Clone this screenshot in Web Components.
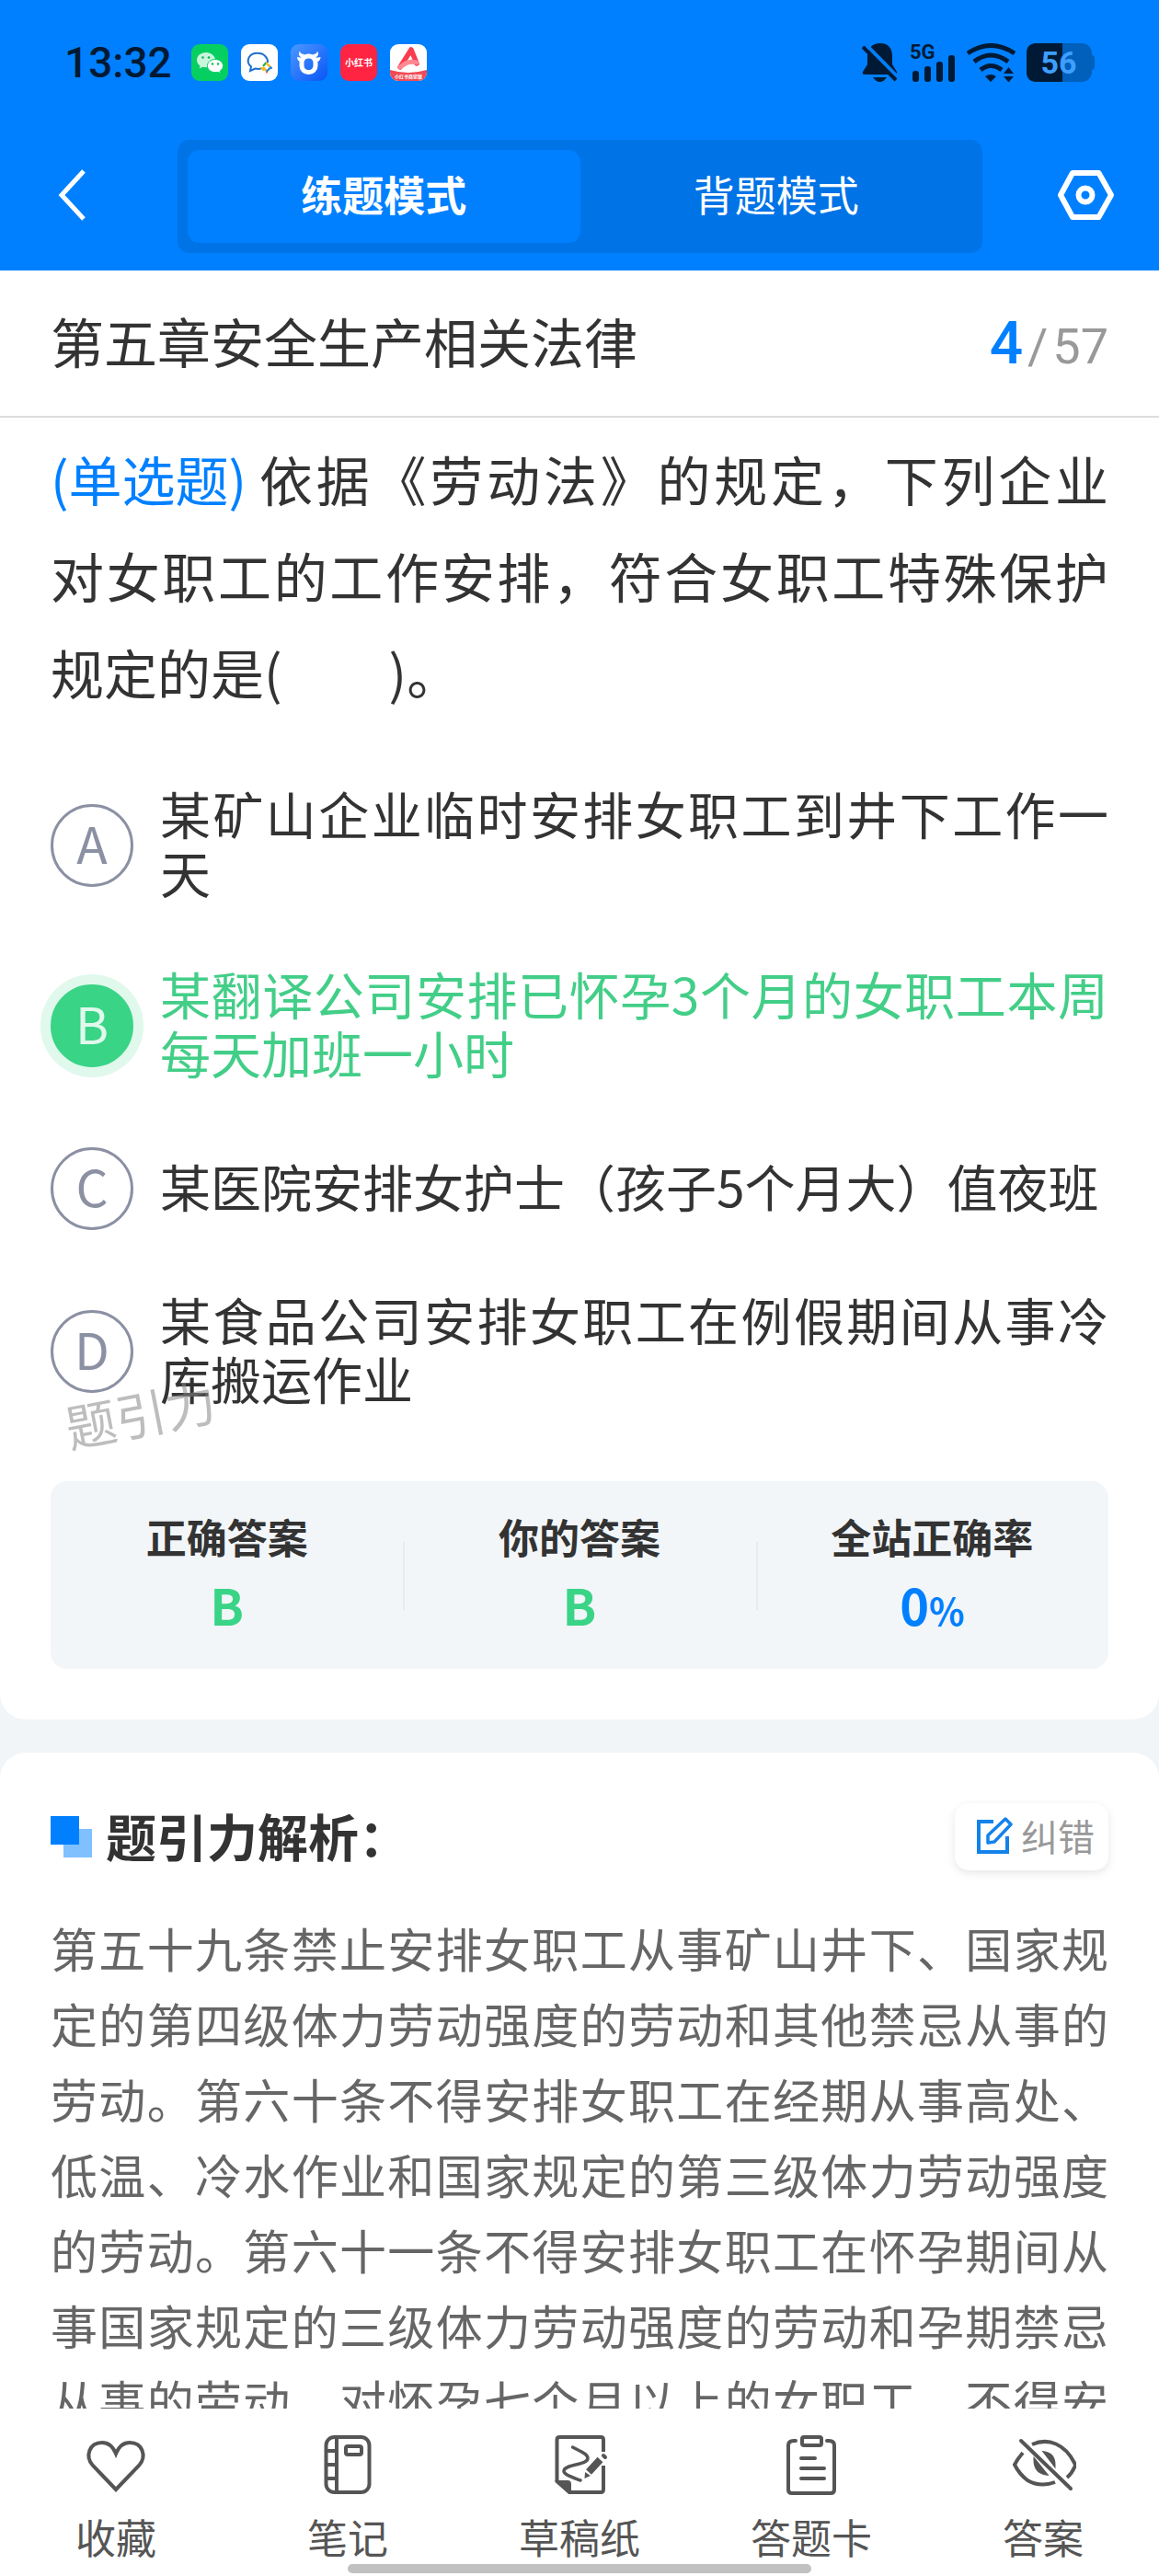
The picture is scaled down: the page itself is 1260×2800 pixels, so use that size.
<!DOCTYPE html>
<html lang="zh-CN">
<head>
<meta charset="utf-8">
<meta name="viewport" content="width=device-width, initial-scale=1">
<title>第五章安全生产相关法律</title>
<style>
  html, body {
    margin: 0;
    height: 100%;
  }
  body {
    font-family: "Noto Sans CJK SC", "Noto Sans", sans-serif;
    color: #333;
    background: #f1f5f8;
    --blue: #0080ff;
    --green: #3ad487;
    --side: 55px;
  }
</style>
</head>
<body>
<quiz-app>
  <status-bar slot="header" time="13:32"></status-bar>
  <mode-nav slot="header"></mode-nav>
  <chapter-bar current="4" total="57">第五章安全生产相关法律</chapter-bar>
  <quiz-card class="first">
    <question-text type="(单选题)">依据《劳动法》的规定，下列企业对女职工的工作安排，符合女职工特殊保护规定的是(　　)。</question-text>
    <answer-options watermark="题引力"></answer-options>
    <answer-stats></answer-stats>
  </quiz-card>
  <quiz-card>
    <answer-analysis label="题引力解析：">第五十九条禁止安排女职工从事矿山井下、国家规定的第四级体力劳动强度的劳动和其他禁忌从事的劳动。第六十条不得安排女职工在经期从事高处、低温、冷水作业和国家规定的第三级体力劳动强度的劳动。第六十一条不得安排女职工在怀孕期间从事国家规定的三级体力劳动强度的劳动和孕期禁忌从事的劳动。对怀孕七个月以上的女职工，不得安</answer-analysis>
  </quiz-card>
  <tool-bar slot="footer"></tool-bar>
</quiz-app>

<script>
function define(name, html, setup) {
  const template = document.createElement('template');
  template.innerHTML = html;
  customElements.define(name, class extends HTMLElement {
    constructor() {
      super();
      this.attachShadow({ mode: 'open' });
      this.shadowRoot.appendChild(template.content.cloneNode(true));
    }
    connectedCallback() {
      if (setup) setup.call(this, this.shadowRoot);
    }
  });
}

define('quiz-app', `
  <style>
    :host {
      display: flex;
      flex-direction: column;
      height: 100vh;
    }
    header { background: var(--blue); }
    main {
      flex: 1;
      min-height: 0;
      overflow: hidden;
    }
  </style>
  <header><slot name="header"></slot></header>
  <main><slot></slot></main>
  <slot name="footer"></slot>
`);

define('status-bar', `
  <style>
    :host {
      display: flex;
      align-items: center;
      justify-content: space-between;
      height: 136px;
      padding: 0 70px;
      color: #001a35;
    }
    div {
      display: flex;
      align-items: center;
    }
    .apps { gap: 14px; }
    .system { gap: 12px; }
    time {
      font: 500 46px/56px Roboto, sans-serif;
      margin-right: 7px;
    }
    svg { display: block; }
    text { font-family: "Noto Sans CJK SC", sans-serif; font-weight: 700; }
    .num { font-family: Roboto, sans-serif; }
  </style>
  <div class="apps">
    <time></time>
    <svg width="40" height="40" viewBox="0 0 40 40">
      <rect width="40" height="40" rx="9" fill="#06cf62"/>
      <path d="M16 9c-5.500 0-10 3.600-10 8.200 0 2.600 1.400 4.700 3.500 6.200l-.6 3 3.400-1.700c1.200.3 2.400.5 3.700.5 5.500 0 10-3.600 10-8s-4.500-8.200-10-8.200z" fill="#c9f5dc"/>
      <path d="M26 16.500c-4.800 0-8.600 3.200-8.600 7.100s3.800 7.100 8.600 7.100c1 0 2-.1 2.900-.4l2.800 1.500-.5-2.600c2-1.300 3.300-3.300 3.300-5.600 0-3.900-3.700-7.100-8.500-7.100z" fill="#fff" stroke="#06cf62"/>
      <g fill="#06b956"><circle cx="12.500" cy="14.500" r="1.300"/><circle cx="19" cy="14.500" r="1.300"/><circle cx="23" cy="21.500" r="1.200"/><circle cx="29" cy="21.500" r="1.200"/></g>
    </svg>
    <svg width="40" height="40" viewBox="0 0 40 40">
      <rect width="40" height="40" rx="9" fill="#fff"/>
      <path d="M22 26.500c-2.200.6-4.300.6-6.500 0L10 29l1-4.500C4 18 9 9.800 18 9.800c7 0 11.500 5 11 10.200" fill="none" stroke="#1f6fd0" stroke-width="2"/>
      <g fill="none" stroke-width="2.200" stroke-linecap="round">
        <path d="M27 20.500l-2.500 2.800" stroke="#22b04b"/><path d="M31 24l2 2" stroke="#1f7fe0"/>
        <path d="M28 29.500v1" stroke="#f0602a"/><path d="M22.500 26l2 2" stroke="#f7b718"/>
        <path d="M28 21l3 3M24.500 25.500l3 3.500" stroke="#f7b718"/><path d="M31 26.500l-2.500 2.500" stroke="#1f7fe0"/>
      </g>
    </svg>
    <svg width="40" height="40" viewBox="0 0 40 40">
      <linearGradient id="ox" x1="0" y1="0" x2="1" y2="1"><stop offset="0" stop-color="#4c98ff"/><stop offset="1" stop-color="#0a55f5"/></linearGradient>
      <rect width="40" height="40" rx="9" fill="url(#ox)"/>
      <rect x="12" y="13" width="15" height="17.500" rx="7" fill="none" stroke="#fff" stroke-width="5"/>
      <path d="M10 7.500c0 2 2 3.500 5 3.500l-3 3.500c-3-1.500-4-4-2-7zm19 0c0 2-2 3.500-5 3.500l3 3.500c3-1.500 4-4 2-7zM7 14l6 1-2 4c-2 0-4-2-4-5zm25.500 0l-6 1 2 4c2 0 4-2 4-5z" fill="#fff"/>
    </svg>
    <svg width="40" height="40" viewBox="0 0 40 40">
      <rect width="40" height="40" rx="9" fill="#ff2442"/>
      <text x="20" y="24" font-size="10" text-anchor="middle" fill="#fff">小红书</text>
    </svg>
    <svg width="40" height="40" viewBox="0 0 40 40">
      <clipPath id="seller"><rect width="40" height="40" rx="9"/></clipPath>
      <g clip-path="url(#seller)">
        <rect width="40" height="40" fill="#fff"/>
        <path d="M0 28q20 6 40 0v12H0z" fill="#f04a55"/>
        <path d="M11 25L23 6l6 15" fill="none" stroke="#fb3b50" stroke-width="5.500" stroke-linecap="round" stroke-linejoin="round"/>
        <path d="M11 25q9-8 18-5" fill="none" stroke="#ff8890" stroke-width="5" stroke-linecap="round"/>
        <text x="20" y="37" font-size="5" text-anchor="middle" fill="#fff">小红书商家版</text>
      </g>
    </svg>
  </div>
  <div class="system">
    <svg width="40" height="42" viewBox="0 0 40 42" fill="currentColor">
      <path d="M20 0C11 0 6 6 6 14v9l-5 8q-1 3 2 3h33q3 0 2-3l-5-8v-9C33 6 29 0 20 0z"/>
      <path d="M12 37h15c-2 3-4.500 5-7.500 5S14 40 12 37z"/>
      <path d="M0-3l42 43" stroke="#0080ff" stroke-width="4"/>
      <path d="M1 4l36 36" stroke="currentColor" stroke-width="4"/>
    </svg>
    <svg width="50" height="54" viewBox="0 -6 50 54" fill="currentColor">
      <text class="num" x="0" y="17" font-size="22">5G</text>
      <rect x="3" y="30" width="7" height="12" rx="3"/>
      <rect x="16" y="25" width="7" height="17" rx="3"/>
      <rect x="29" y="20" width="7" height="22" rx="3"/>
      <rect x="42" y="13" width="7" height="29" rx="3"/>
    </svg>
    <svg width="53" height="42" viewBox="0 0 53 42" fill="none" stroke="currentColor" stroke-width="5">
      <path d="M1 11q25-17 51 0M8 20q18-14 37 0M15 29q11-9 23 0"/>
      <path d="M20 36q6-4 12 0l-6 6z M40 33l5.500-7 5.500 7zM40 36h11l-5.500 6.500z" fill="currentColor" stroke="none"/>
    </svg>
    <svg width="74" height="42" viewBox="0 0 74 42">
      <rect width="71" height="42" rx="11" fill="#0060bb"/>
      <path d="M11 0h28v42H11Q0 42 0 31V11Q0 0 11 0z" fill="#001a35"/>
      <path d="M71 13q3 0 3 4v8q0 4-3 4z" fill="#0060bb"/>
      <text class="num" x="35" y="33" font-size="34" text-anchor="middle" fill="#3d9fff">56</text>
    </svg>
  </div>
`, function (root) {
  root.querySelector('time').textContent = this.getAttribute('time');
});

define('mode-nav', `
  <style>
    :host {
      display: grid;
      grid-template-columns: 145px 1fr 144px;
      align-items: center;
      padding: 16px 48px 19px;
      color: #fff;
    }
    button {
      border: 0;
      padding: 0 0 4px;
      background: none;
      color: inherit;
      font: inherit;
    }
    .tabs {
      display: flex;
      padding: 11px;
      border-radius: 13px;
      background: #0073e6;
    }
    .tabs button {
      flex: 1;
      height: 101px;
      padding-bottom: 6px;
      border-radius: 13px;
      font-size: 45px;
    }
    .tabs [aria-selected="true"] {
      background: var(--blue);
      font-weight: 700;
    }
    .settings { justify-self: end; }
    svg {
      display: block;
      fill: none;
      stroke: currentColor;
    }
  </style>
  <button aria-label="返回">
    <svg width="60" height="60" viewBox="0 0 60 60" stroke-width="5"><path d="M43 4L19 30l24 26"/></svg>
  </button>
  <div class="tabs" role="tablist">
    <button role="tab" aria-selected="true">练题模式</button>
    <button role="tab" aria-selected="false">背题模式</button>
  </div>
  <button class="settings" aria-label="设置">
    <svg width="64" height="60" viewBox="0 0 64 60" stroke-width="6" stroke-linejoin="round">
      <path d="M18 6h28.500L60 30 46.500 54H18L5 30z"/><circle cx="32" cy="30" r="7.500"/>
    </svg>
  </button>
`, function (root) {
  const tabs = root.querySelectorAll('[role=tab]');
  tabs.forEach(tab => tab.addEventListener('click', () => {
    tabs.forEach(t => t.setAttribute('aria-selected', t === tab));
  }));
});

define('chapter-bar', `
  <style>
    :host {
      display: flex;
      align-items: center;
      justify-content: space-between;
      height: 152px;
      padding: 0 var(--side) 6px;
      border-bottom: 2px solid #ddd;
      background: #fff;
    }
    h1 {
      margin: 0;
      font-size: 58px;
      font-weight: 400;
      line-height: 80px;
    }
    p {
      display: flex;
      align-items: baseline;
      gap: 5px;
      margin: 0;
      padding-top: 10px;
      font-family: Roboto, sans-serif;
      font-size: 54px;
      line-height: 80px;
      color: #999;
    }
    b {
      font-size: 64px;
      font-weight: 500;
      color: var(--blue);
    }
  </style>
  <h1><slot></slot></h1>
  <p><b></b><span>/</span><span class="total"></span></p>
`, function (root) {
  root.querySelector('b').textContent = this.getAttribute('current');
  root.querySelector('.total').textContent = this.getAttribute('total');
});

define('quiz-card', `
  <style>
    :host {
      display: block;
      padding: 55px var(--side);
      border-radius: 28px;
      background: #fff;
    }
    :host(.first) {
      margin-bottom: 36px;
      padding-top: 14px;
      border-radius: 0 0 28px 28px;
    }
  </style>
  <slot></slot>
`);

define('question-text', `
  <style>
    :host { display: block; }
    p {
      margin: 0;
      font-size: 58px;
      line-height: 105px;
      text-align: justify;
    }
    span {
      display: inline-block;
      margin-right: 10px;
      color: var(--blue);
    }
  </style>
  <p><span></span><slot></slot></p>
`, function (root) {
  root.querySelector('span').textContent = this.getAttribute('type');
});

const options = [
  ['A', '某矿山企业临时安排女职工到井下工作一天'],
  ['B', '某翻译公司安排已怀孕3个月的女职工本周每天加班一小时'],
  ['C', '某医院安排女护士（孩子5个月大）值夜班'],
  ['D', '某食品公司安排女职工在例假期间从事冷库搬运作业']
];

define('answer-options', `
  <style>
    :host {
      display: block;
      position: relative;
      margin-top: 72px;
    }
    fieldset {
      display: grid;
      gap: 68px;
      min-width: 0;
      margin: 0;
      padding: 0;
      border: 0;
    }
    label {
      display: grid;
      grid-template-columns: 90px 1fr;
      column-gap: 29px;
      align-items: center;
      font-size: 55px;
      line-height: 64px;
      text-align: justify;
    }
    input, .letter { grid-area: 1 / 1; }
    input {
      appearance: none;
      box-sizing: border-box;
      width: 90px;
      height: 90px;
      margin: 0;
      border: 3px solid #8b90a3;
      border-radius: 50%;
    }
    .letter, .text { margin: -4px 0 4px; }
    .letter {
      z-index: 1;
      text-align: center;
      color: #8b90a3;
    }
    input:checked {
      border-color: var(--green);
      background: var(--green);
      box-shadow: 0 0 0 11px #e0f9ec;
    }
    input:checked ~ .letter { color: #e0f9ec; }
    input:checked ~ .text { color: #43ce88; }
    .watermark {
      position: absolute;
      left: 15px;
      bottom: -34px;
      font-size: 55px;
      line-height: 64px;
      color: #888;
      opacity: .55;
      transform: rotate(-11deg);
      pointer-events: none;
    }
  </style>
  <fieldset></fieldset>
  <span class="watermark"></span>
`, function (root) {
  root.querySelector('fieldset').innerHTML = options.map(([letter, text]) => `
    <label>
      <input type="radio" name="answer" value="${letter}" ${letter === 'B' ? 'checked' : ''}>
      <span class="letter">${letter}</span>
      <span class="text">${text}</span>
    </label>`).join('');
  root.querySelector('.watermark').textContent = this.getAttribute('watermark');
});

define('answer-stats', `
  <style>
    :host {
      display: block;
      margin-top: 77px;
    }
    dl {
      display: grid;
      grid-template-columns: repeat(3, 1fr);
      align-items: center;
      height: 204px;
      margin: 0;
      border-radius: 18px;
      background: #f2f6f9;
      text-align: center;
      font-weight: 700;
    }
    div + div {
      background: linear-gradient(#e8ecef, #e8ecef) left 38px / 2px 74px no-repeat;
    }
    dt {
      font-size: 44px;
      line-height: 64px;
    }
    dd {
      margin: 0;
      font-size: 54px;
      line-height: 84px;
      color: var(--green);
    }
    .rate { color: var(--blue); }
    small {
      font-size: 40px;
      line-height: 40px;
    }
  </style>
  <dl>
    <div><dt>正确答案</dt><dd>B</dd></div>
    <div><dt>你的答案</dt><dd>B</dd></div>
    <div><dt>全站正确率</dt><dd class="rate">0<small>%</small></dd></div>
  </dl>
`);

define('answer-analysis', `
  <style>
    :host { display: block; }
    .head {
      display: flex;
      align-items: center;
      gap: 15px;
    }
    .mark { display: block; }
    h2 {
      flex: 1;
      margin: 0;
      padding-bottom: 5px;
      font-size: 55px;
      line-height: 68px;
    }
    button {
      box-sizing: border-box;
      display: flex;
      align-items: center;
      justify-content: center;
      gap: 9px;
      width: 167px;
      height: 73px;
      padding: 0 0 4px 8px;
      border: 0;
      border-radius: 15px;
      background: #fff;
      box-shadow: 0 3px 10px rgba(0, 0, 0, .1);
      color: #999;
      font: inherit;
      font-size: 40px;
      line-height: 60px;
    }
    p {
      margin: 43px 0 0;
      font-size: 51px;
      line-height: 82px;
      text-align: justify;
      text-align-last: justify;
      color: #666;
    }
  </style>
  <div class="head">
    <svg class="mark" width="45" height="45" viewBox="0 0 45 45">
      <rect x="14" y="14" width="31" height="31" fill="#80c0ff"/>
      <rect width="31" height="31" fill="#0080ff"/>
    </svg>
    <h2></h2>
    <button>
      <svg width="40" height="42" viewBox="0 0 40 42" fill="none" stroke="#1482ea" stroke-width="4">
        <path d="M19 6H3v33h31V22"/>
        <path d="M13 29v-8L32 3l6 6-18 19z" stroke-width="3.500" stroke-linejoin="round"/>
      </svg>
      <span>纠错</span>
    </button>
  </div>
  <p><slot></slot></p>
`, function (root) {
  root.querySelector('h2').textContent = this.getAttribute('label');
});

const tools = [
  ['收藏', `<path d="M36 63L11 37C2 27 7 12 21 12q10 0 15 12Q41 12 51 12C65 12 70 27 61 37z" stroke-linejoin="miter"/>`],
  ['笔记', `<rect x="12.500" y="6" width="47" height="60" rx="9"/><path d="M24 6v60M12 21h12M12 36h12M12 51h12"/><rect x="34" y="16" width="17" height="9" rx="2"/>`],
  ['草稿纸', `<path d="M62 22V9q0-3-3-3H14.500q-3 0-3 3v45L25 66h34q3 0 3-3V37"/>
    <path d="M11.500 54H23q3 0 3 3v9z" fill="currentColor" stroke-width="2"/>
    <path d="M28.500 17C36 21 45 24 45 29c0 8-26 6-26 14 0 4 10 7 18 10" stroke-width="3.500" stroke-linecap="round"/>
    <path d="M58.500 30.500L46 44" stroke-width="8"/><path d="M62 26l2 2" stroke-width="4" stroke-linecap="round"/><path d="M42 44l6 4-6.500 3z" fill="currentColor" stroke="none"/>`],
  ['答题卡', `<path d="M19 10h-2q-6 0-6 5v48q0 4 4 4h42q4 0 4-4V15q0-5-6-5h-2" stroke-linecap="round"/>
    <rect x="26" y="6" width="21" height="9" rx="2"/><path d="M25 29h15M25 40h25M25 51h25" stroke-linecap="round"/>`],
  ['答案', `<path d="M24 14c18-8 36 0 46 20 1 2 1 4 0 5q-3 7-8 11M14 23Q8 30 5 36q5 10 14 17 14 8 30 2" />
    <path d="M38 23q10 2 10 13z M27 31q0 13 12 15z" fill="currentColor" stroke-width="3"/>
    <path d="M12 10l54 52" stroke-linecap="round"/>`]
];

define('tool-bar', `
  <style>
    :host {
      display: block;
      position: relative;
      background: #fff;
    }
    nav {
      display: grid;
      grid-template-columns: repeat(5, 1fr);
      padding: 25px 0 17px;
    }
    button {
      display: grid;
      justify-items: center;
      gap: 16px;
      padding: 0;
      border: 0;
      background: none;
      color: #555;
      font: inherit;
      font-size: 44px;
      line-height: 52px;
    }
    svg {
      fill: none;
      stroke: currentColor;
      stroke-width: 4px;
    }
    .home {
      position: absolute;
      bottom: 3px;
      left: 30%;
      width: 40%;
      height: 10px;
      border-radius: 5px;
      background: #c1c1c1;
    }
  </style>
  <nav></nav>
  <div class="home"></div>
`, function (root) {
  root.querySelector('nav').innerHTML = tools.map(([label, icon]) => `
    <button>
      <svg width="72" height="72" viewBox="0 0 72 72">${icon}</svg>
      <span>${label}</span>
    </button>`).join('');
});
</script>
</body>
</html>
